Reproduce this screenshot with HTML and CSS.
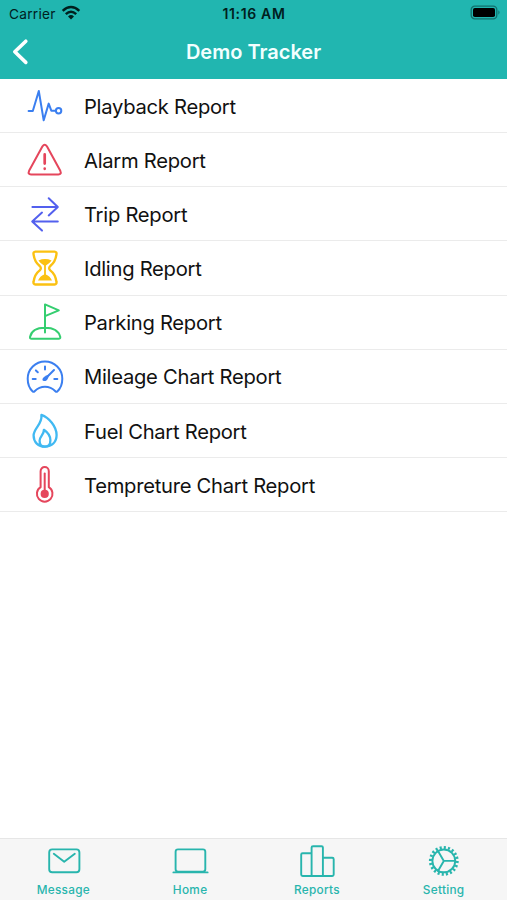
FILE: index.html
```html
<!DOCTYPE html>
<html lang="en">
<head>
<meta charset="utf-8">
<title>Demo Tracker</title>
<link rel="stylesheet" href="styles.css">
</head>
<body>
<div class="app">
  <header class="header">
    <div class="status">
      <div class="carrier"><span class="carrier-name">Carrier</span>
        <svg class="wifi" width="20" height="16" viewBox="0 0 20 16" fill="none" stroke="#00201e" stroke-width="2.5"><path d="M1.7 5.8Q10-1.8 18.3 5.8M4.8 9.2Q10 4.4 15.2 9.2"/><path d="M7 11.4Q10 8.8 13 11.4L10 14.6Z" fill="#00201e" stroke="none"/></svg>
      </div>
      <div class="time">11:16 AM</div>
      <svg class="battery" width="32" height="16" viewBox="0 0 32 16"><rect x="1.2" y="1.2" width="25.6" height="12.6" rx="3.6" fill="none" stroke="#11716d" stroke-width="1.3"/><rect x="3" y="3" width="22" height="9" rx="1.8"/><path d="M28.4 5.3Q30.7 7.5 28.4 9.7Z" fill="#11716d"/></svg>
    </div>
    <div class="nav">
      <svg class="back" width="32" height="32" viewBox="0 0 32 32" fill="none" stroke="#fff" stroke-width="3.6" stroke-linecap="round" stroke-linejoin="round"><path d="M17.8 5.2L6.8 15.8L17.8 26.4"/></svg>
      <h1 class="title">Demo Tracker</h1>
      <span></span>
    </div>
  </header>

  <main class="list">
    <div class="row">
      <svg class="icon blue" viewBox="0 0 50 54"><path d="M8.6 32H12.8L18.8 12L23.7 41.3L28.7 24.6L31.3 31.7H35.6"/><circle cx="38.6" cy="31.7" r="2.7"/></svg>
      <span class="label">Playback Report</span>
    </div>
    <div class="row">
      <svg class="icon red" viewBox="0 0 50 54"><path d="M22.5 13.3Q24.7 10.3 26.9 13.3L40.3 37.8Q41.8 41.4 38.4 41.4H11Q7.6 41.4 9.1 37.8Z"/><path class="thick" d="M24.7 21.4V30.6M24.7 35.7V35.8"/></svg>
      <span class="label">Alarm Report</span>
    </div>
    <div class="row">
      <svg class="icon indigo" viewBox="0 0 50 54"><path d="M12.4 20H37.6M28.7 11.2L37.8 20L28.7 28.4M37.8 34.4H12.4M22 25.6L12.2 34.4L22 43.6"/></svg>
      <span class="label">Trip Report</span>
    </div>
    <div class="row">
      <svg class="icon amber" viewBox="0 0 50 54"><path d="M15.5 10.6H34.5Q37 10.8 36.4 13.6C35.6 19.5 34 22 30.3 25Q28 27.2 30.3 29.4C34 32.2 35.6 35 36.4 40.6Q37 43.3 34.5 43.5H15.5Q13 43.3 13.6 40.6C14.4 35 16 32.2 19.7 29.4Q22 27.2 19.7 25C16 22 14.4 19.5 13.6 13.6Q13 10.8 15.5 10.6Z"/><path class="solid" d="M18.4 19.4Q25 16.6 31.6 19.4Q30 21.8 25.9 24.5V33.5Q30 35 32 39.4H18Q20 35 24.1 33.5V24.5Q20 21.8 18.4 19.4Z"/></svg>
      <span class="label">Idling Report</span>
    </div>
    <div class="row">
      <svg class="icon green" viewBox="0 0 50 54"><path d="M25 37.4V9.4L38.8 15.4L25 21.2M10 42C11.3 36 17 32.8 25 32.8S38.7 36 40.3 42Q40.4 43.8 38.6 43.8H11.6Q9.8 43.8 10 42Z"/></svg>
      <span class="label">Parking Report</span>
    </div>
    <div class="row">
      <svg class="icon blue" viewBox="0 0 50 54"><path d="M12.7 42.4C9.4 39.5 7.7 35 7.7 29.8A17.3 17.3 0 0 1 42.3 29.8C42.3 35 40.6 39.5 37.3 42.4C36.6 43 36 42.8 35.4 42.2C29.4 36.2 20.6 36.2 14.6 42.2C14 42.8 13.4 43 12.7 42.4Z"/><path d="M12.7 29.9H15.7M34.3 29.9H37.3M25 17.4V20.4M15.9 21.4L17.8 23.2M27 28L34 21"/><path class="solid" d="M22.4 30.2Q23 27.5 29 25.4Q28.2 31 25.5 32Q22.3 32.6 22.4 30.2Z"/></svg>
      <span class="label">Mileage Chart Report</span>
    </div>
    <div class="row">
      <svg class="icon sky" viewBox="0 0 50 54"><path d="M21.4 10.8C29 13.4 36.6 22.6 36.6 31C36.6 38.2 31.8 42.7 25 42.7S13.6 38.2 13.6 31.6C13.6 24 22.6 20.4 21.4 10.8Z"/><path d="M23.9 25.8C28 28.6 30.4 32.6 30.4 36.3C30.4 40.3 28.4 42.7 25 42.7S19.6 40.3 19.6 36.7C19.6 32.4 24.2 30.6 23.9 25.8Z"/></svg>
      <span class="label">Fuel Chart Report</span>
    </div>
    <div class="row">
      <svg class="icon red" viewBox="0 0 50 54"><path d="M20.6 13.2A4.1 4.1 0 0 1 28.8 13.2V29.2A7.8 7.8 0 1 1 20.6 29.2Z"/><path d="M24.7 15.4V34"/><circle class="solid" cx="24.7" cy="35.9" r="4.1"/></svg>
      <span class="label">Tempreture Chart Report</span>
    </div>
  </main>

  <nav class="tabs">
    <div class="tab">
      <svg class="tab-icon" viewBox="0 0 40 38"><rect x="6.2" y="7.4" width="30.2" height="22.8" rx="3"/><path d="M10.8 11.8L21.2 19.8L31.8 11.8"/></svg>
      <span class="tab-label">Message</span>
    </div>
    <div class="tab">
      <svg class="tab-icon" viewBox="0 0 40 38"><rect x="5.6" y="7.4" width="29.7" height="22.2" rx="2.4"/><path d="M3.4 30.4H37.6"/></svg>
      <span class="tab-label">Home</span>
    </div>
    <div class="tab">
      <svg class="tab-icon" viewBox="0 0 40 38"><path d="M14.6 34V5.6Q14.6 4.2 16 4.2H24.5Q25.9 4.2 25.9 5.6V34M14.6 11.2H5.6Q4.2 11.2 4.2 12.6V32.6Q4.2 34 5.6 34H35.3Q36.7 34 36.7 32.6V17.2Q36.7 15.8 35.3 15.8H25.9"/></svg>
      <span class="tab-label">Reports</span>
    </div>
    <div class="tab">
      <svg class="tab-icon" viewBox="0 0 40 38"><circle cx="19.8" cy="18.9" r="11.4"/><circle class="teeth" cx="19.8" cy="18.9" r="13.4" pathLength="80"/><path d="M19.8 18.9H31.4M19.8 18.9L14 8.9M19.8 18.9L14 28.9"/></svg>
      <span class="tab-label">Setting</span>
    </div>
  </nav>
</div>
</body>
</html>
```

FILE: styles.css
```css
* { box-sizing: border-box; }

body {
  margin: 0;
  font-family: Inter, "Liberation Sans", sans-serif;
  background: #fff;
}

.app {
  display: flex;
  flex-direction: column;
  height: 900px;
  overflow: hidden;
}

.header {
  height: 79px;
  background: #21b6b0;
}

.status {
  display: grid;
  grid-template-columns: 1fr auto 1fr;
  align-items: center;
  height: 27px;
  padding: 0 5px 0 9px;
  color: #00201e;
}

.carrier {
  display: flex;
  align-items: center;
  gap: 5px;
}

.carrier-name {
  font-size: 13.7px;
  letter-spacing: 0.25px;
}

.wifi { margin-top: -2px; }

.time {
  margin-right: 3px;
  font-size: 14px;
  font-weight: 600;
  letter-spacing: 0.65px;
}

.battery {
  justify-self: end;
  margin-top: -1px;
}

.nav {
  display: grid;
  grid-template-columns: 1fr auto 1fr;
  align-items: center;
  height: 50px;
  padding: 0 8px;
}

.title {
  margin: 0;
  font-size: 20px;
  font-weight: 600;
  color: #f2ffff;
}

.list { flex: 1; }

.row {
  display: flex;
  align-items: center;
  gap: 14px;
  height: 54.17px;
  padding-left: 20px;
  border-bottom: 1.4px solid #ebebeb;
}

.icon {
  width: 50px;
  height: 54px;
  flex: none;
  fill: none;
  stroke: currentColor;
  stroke-width: 2;
  stroke-linecap: round;
  stroke-linejoin: round;
}

.thick { stroke-width: 2.7; }
.solid { fill: currentColor; stroke: none; }

.blue { color: #3b7ff0; }
.red { color: #e5465c; }
.indigo { color: #5360ee; }
.amber { color: #fbc112; stroke-width: 2.4; }
.green { color: #35ce70; }
.sky { color: #41b9f2; stroke-width: 2.3; }

.label {
  padding-top: 1px;
  font-size: 20.2px;
  letter-spacing: -0.27px;
  color: #111;
  white-space: nowrap;
}

.tabs {
  display: grid;
  grid-template-columns: repeat(4, 1fr);
  height: 62px;
  background: #f6f6f6;
  border-top: 1px solid #e6e6e6;
}

.tab {
  display: flex;
  flex-direction: column;
  align-items: center;
  padding-top: 3px;
  color: #28b5ad;
}

.tab-icon {
  width: 40px;
  height: 38px;
  fill: none;
  stroke: currentColor;
  stroke-width: 1.9;
  stroke-linecap: round;
  stroke-linejoin: round;
}

.teeth {
  stroke-width: 3;
  stroke-linecap: butt;
  stroke-dasharray: 2 2;
}

.tab-label {
  padding-top: 1px;
  font-size: 11.8px;
  line-height: 18px;
  font-weight: 500;
  letter-spacing: 0.3px;
}
```
